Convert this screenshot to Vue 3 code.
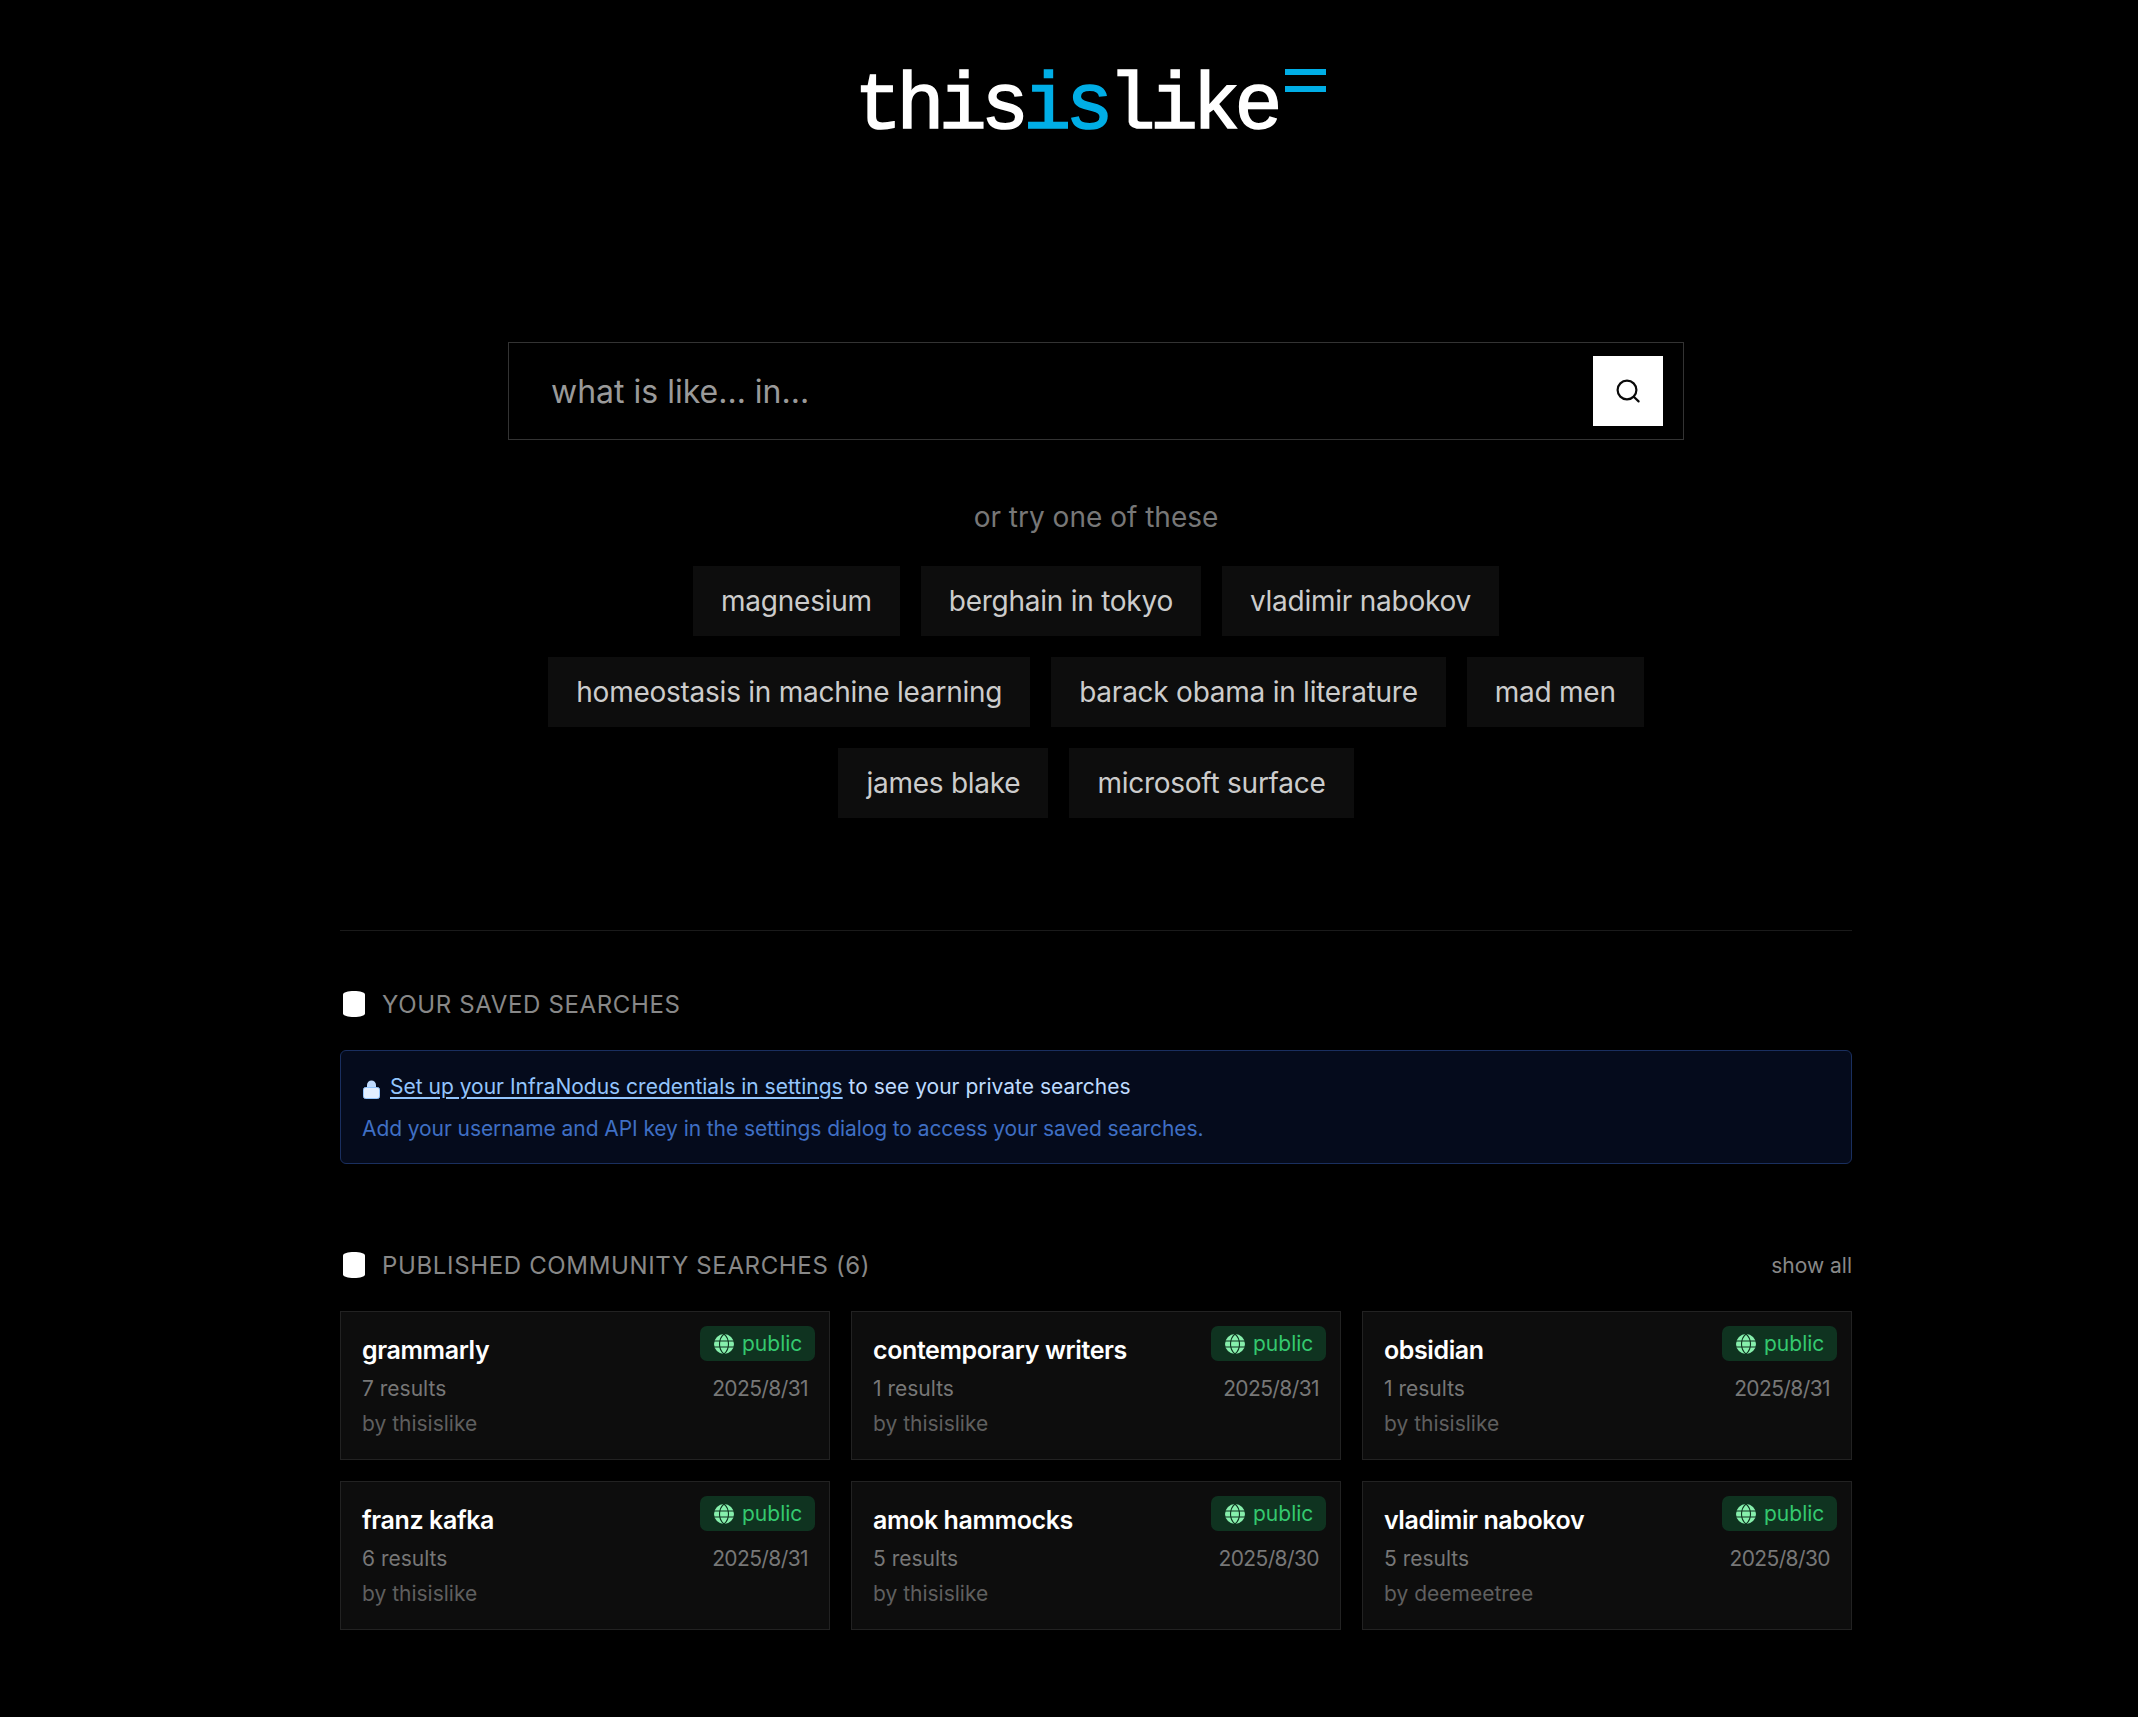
<script setup>
const rows = [
  ['magnesium', 'berghain in tokyo', 'vladimir nabokov'],
  ['homeostasis in machine learning', 'barack obama in literature', 'mad men'],
  ['james blake', 'microsoft surface'],
]
const cards = [
  { t: 'grammarly', r: '7 results', d: '2025/8/31', b: 'by thisislike' },
  { t: 'contemporary writers', r: '1 results', d: '2025/8/31', b: 'by thisislike' },
  { t: 'obsidian', r: '1 results', d: '2025/8/31', b: 'by thisislike' },
  { t: 'franz kafka', r: '6 results', d: '2025/8/31', b: 'by thisislike' },
  { t: 'amok hammocks', r: '5 results', d: '2025/8/30', b: 'by thisislike' },
  { t: 'vladimir nabokov', r: '5 results', d: '2025/8/30', b: 'by deemeetree' },
]
</script>

<template>
  <div class="page">
    <main class="wrap">
      <header class="logo">
        <span class="logo-text">this<span class="blue">is</span>like</span>
        <span class="logo-bars"><i></i><i></i></span>
      </header>

      <div class="search">
        <span class="placeholder">what is like... in...</span>
        <button class="go" aria-label="search">
          <svg width="26" height="26" viewBox="0 0 26 26" fill="none" stroke="#0a0a0a" stroke-width="2.2">
            <circle cx="12" cy="12" r="9.4" />
            <path d="M19 19l4.6 4.4" stroke-linecap="round" />
          </svg>
        </button>
      </div>

      <p class="try">or try one of these</p>
      <div class="tags">
        <div v-for="(row, i) in rows" :key="i" class="tag-row">
          <span v-for="tag in row" :key="tag" class="tag">{{ tag }}</span>
        </div>
      </div>

      <hr class="rule" />

      <h2 class="heading saved">
        <svg class="db" width="24" height="26" viewBox="0 0 24 26"><path fill="#fff" d="M12 0c6 0 11 1.200 11 3.500v19c0 2.300-5 3.500-11 3.500S1 24.800 1 22.500v-19C1 1.200 6 0 12 0z" /></svg>
        <span>YOUR SAVED SEARCHES</span>
      </h2>
      <div class="notice">
        <p class="n1">
          <svg class="lock" width="17" height="19" viewBox="0 0 17 19"><path fill="#bfdbfe" d="M4 9V5a4.500 4.500 0 0 1 9 0v4z" /><rect x="0.500" y="7.500" width="16" height="11" rx="2" fill="#e3efff" stroke="#93c5fd" /></svg>
          <a class="link">Set up your InfraNodus credentials in settings</a> to see your private searches
        </p>
        <p class="n2">Add your username and API key in the settings dialog to access your saved searches.</p>
      </div>

      <div class="pub-head">
        <h2 class="heading">
          <svg class="db" width="24" height="26" viewBox="0 0 24 26"><path fill="#fff" d="M12 0c6 0 11 1.200 11 3.500v19c0 2.300-5 3.500-11 3.500S1 24.800 1 22.500v-19C1 1.200 6 0 12 0z" /></svg>
          <span>PUBLISHED COMMUNITY SEARCHES (6)</span>
        </h2>
        <span class="show">show all</span>
      </div>

      <section class="grid">
        <article v-for="c in cards" :key="c.t" class="card">
          <span class="badge">
            <svg width="20" height="20" viewBox="0 0 20 20">
              <circle cx="10" cy="10" r="10" fill="#86efac" />
              <path fill="none" stroke="#0f3320" stroke-width="1.100" d="M0 7h20M0 13h20M10 0c-6 5-6 15 0 20M10 0c6 5 6 15 0 20" />
            </svg>
            public
          </span>
          <h3 class="title">{{ c.t }}</h3>
          <div class="meta"><span>{{ c.r }}</span><span class="date">{{ c.d }}</span></div>
          <div class="by">{{ c.b }}</div>
        </article>
      </section>
    </main>
  </div>
</template>

<style>
html, body { margin: 0; background: #000; }
</style>

<style scoped>
.page {
  min-height: 1717px;
  padding-left: 54px;
  box-sizing: border-box;
  background: #000;
  font-family: Inter, "Liberation Sans", sans-serif;
  color: #fff;
}
.wrap { width: 1512px; margin: 0 auto; }
.logo {
  display: flex;
  justify-content: center;
  align-items: flex-start;
  height: 342px;
  box-sizing: border-box;
  padding-top: 69px;
  padding-right: 12px;
}
.logo-text {
  font-family: "Liberation Mono", monospace;
  font-size: 80px;
  line-height: 60px;
  letter-spacing: -5.75px;
  color: #fff;
  -webkit-text-stroke: 1.600px currentColor;
  margin-top: 8px;
}
.blue { color: #00aee6; }
.logo-bars { display: flex; flex-direction: column; gap: 11px; margin-left: 8px; }
.logo-bars i { display: block; width: 41px; height: 6px; background: #00aee6; }
.search {
  width: 1176px;
  height: 98px;
  box-sizing: border-box;
  margin: 0 auto;
  border: 1px solid #333;
  display: flex;
  align-items: center;
  justify-content: space-between;
  padding: 0 20px 0 42px;
}
.placeholder { font-size: 32px; color: #9a9a9a; }
.go {
  width: 70px;
  height: 70px;
  border: 0;
  padding: 0;
  background: #fff;
  display: flex;
  align-items: center;
  justify-content: center;
}
.try {
  margin: 57px 0 0;
  height: 40px;
  line-height: 40px;
  text-align: center;
  font-size: 28px;
  color: #777;
}
.tags { margin-top: 29px; display: flex; flex-direction: column; gap: 21px; }
.tag-row { display: flex; justify-content: center; gap: 21px; }
.tag {
  height: 70px;
  line-height: 70px;
  padding: 0 28px;
  background: #0d0d0d;
  font-size: 28px;
  color: #ccc;
  letter-spacing: -0.25px;
}
.rule { border: 0; border-top: 1px solid #1a1a1a; margin: 112px 0 0; }
.heading {
  margin: 0;
  display: flex;
  align-items: center;
  gap: 16px;
  font-size: 24px;
  font-weight: 400;
  letter-spacing: 0.65px;
  color: #888;
  height: 32px;
}
.saved { margin-top: 57px; }
.db { margin-left: 2px; flex: none; }
.notice {
  margin-top: 30px;
  height: 114px;
  box-sizing: border-box;
  border: 1px solid #1a2f5f;
  border-radius: 6px;
  background: #050b1c;
  padding: 21px 21px 0;
  font-size: 21px;
}
.notice p { margin: 0; line-height: 30px; }
.n1 { color: #bfdbfe; }
.lock { vertical-align: -5px; margin-left: 1px; margin-right: 10px; }
.link { color: #93c5fd; text-decoration: underline; text-underline-offset: 3px; }
.n2 { margin-top: 12px !important; color: #3f6fc4; letter-spacing: -0.08px; }
.pub-head { margin-top: 85px; display: flex; align-items: center; justify-content: space-between; }
.show { font-size: 21px; color: #888; }
.grid {
  margin-top: 30px;
  display: grid;
  grid-template-columns: repeat(3, 490px);
  gap: 21px;
}
.card {
  position: relative;
  height: 149px;
  box-sizing: border-box;
  background: #0d0d0d;
  border: 1px solid #222;
  padding: 20px 21px 0;
}
.badge {
  position: absolute;
  top: 14px;
  right: 14px;
  height: 35px;
  width: 115px;
  box-sizing: border-box;
  display: flex;
  align-items: center;
  gap: 8px;
  padding-left: 14px;
  border-radius: 7px;
  background: #0f3320;
  color: #34c96f;
  font-size: 21px;
}
.title { margin: 0; font-size: 25px; font-weight: 600; line-height: 36px; color: #fff; letter-spacing: -0.4px; }
.meta { margin-top: 5px; display: flex; justify-content: space-between; font-size: 21px; line-height: 32px; color: #777; }
.date { letter-spacing: -0.6px; }
.by { margin-top: 3px; font-size: 21px; line-height: 32px; color: #5f5f5f; }
</style>
